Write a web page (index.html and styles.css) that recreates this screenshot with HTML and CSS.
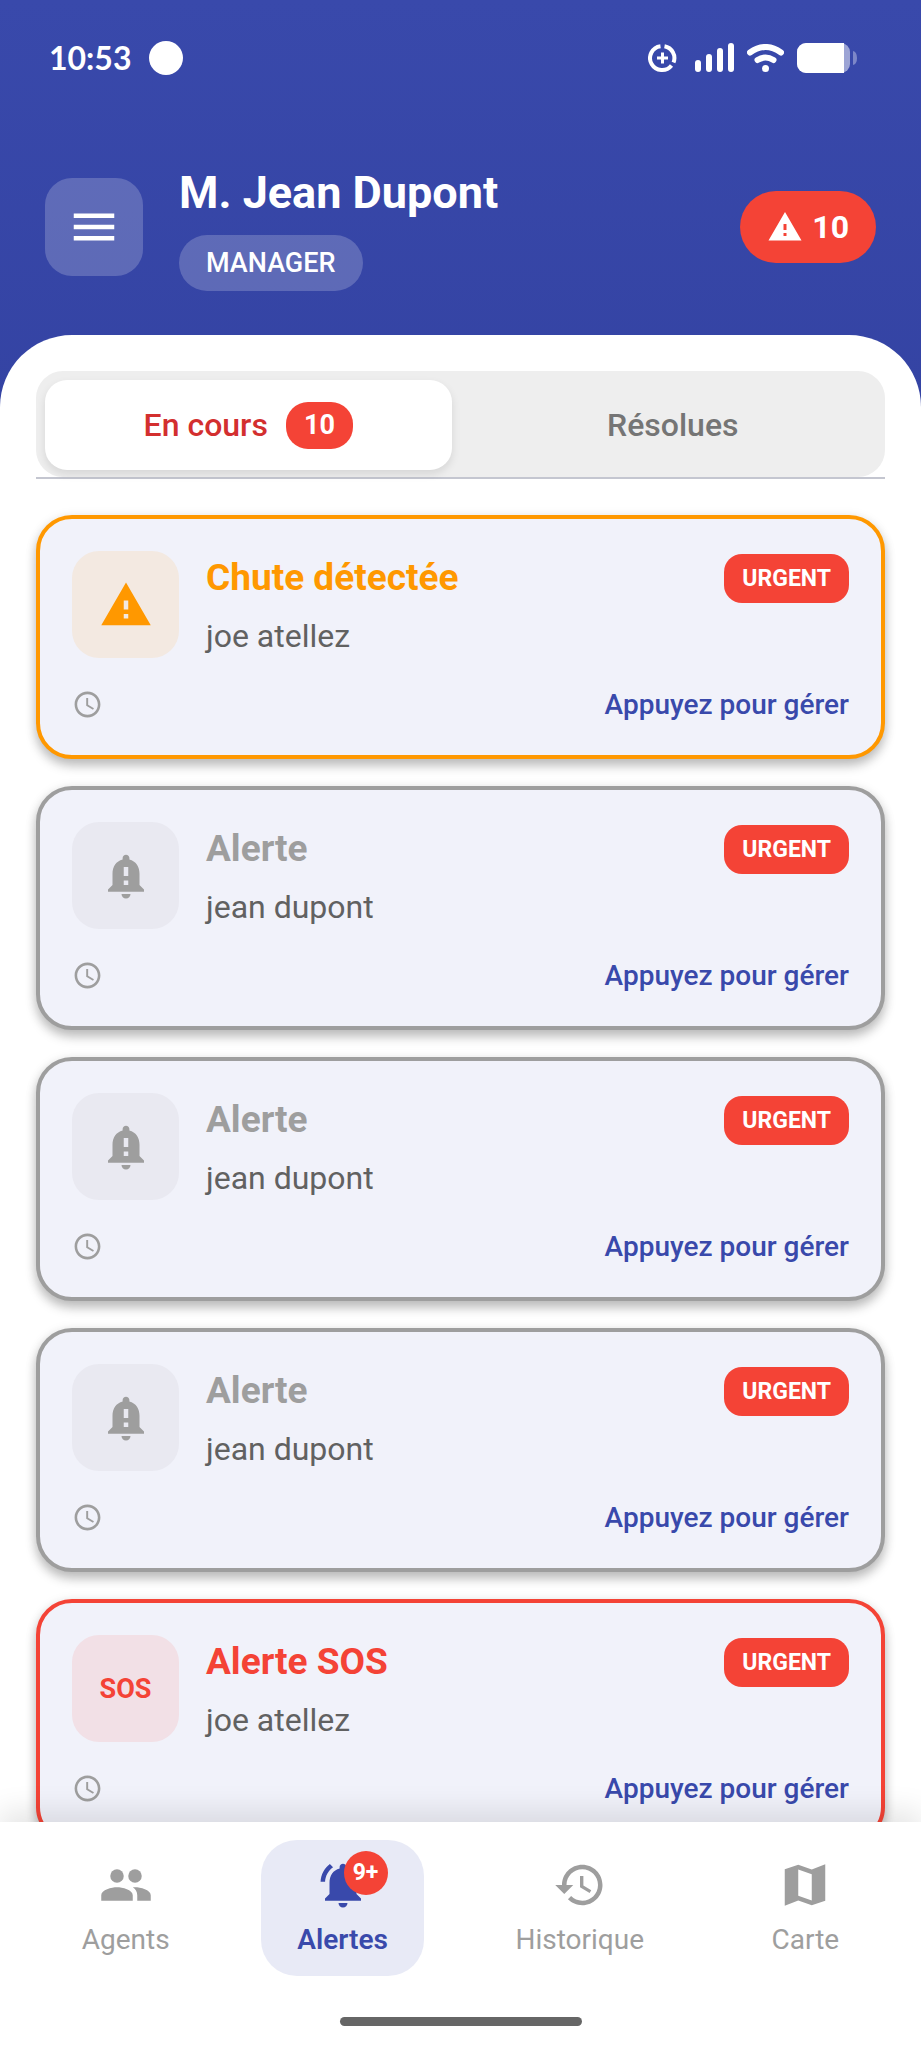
FILE: index.html
```html
<!DOCTYPE html>
<html lang="fr">
<head>
  <meta charset="UTF-8">
  <meta name="viewport" content="width=device-width, initial-scale=1.0">
  <title>Alertes</title>
  <link rel="stylesheet" href="styles.css">
</head>
<body>

  <svg class="sprite" aria-hidden="true">
    <symbol id="i-warning" viewBox="0 0 24 24"><path d="M1 21h22L12 2 1 21zm12-3h-2v-2h2v2zm0-4h-2v-4h2v4z"/></symbol>
    <symbol id="i-bell" viewBox="0 0 24 24"><path d="M18 16v-5c0-3.07-1.64-5.64-4.5-6.32V4c0-.83-.67-1.5-1.5-1.5s-1.5.67-1.5 1.5v.68C7.63 5.36 6 7.92 6 11v5l-2 2v1h16v-1l-2-2zm-5 0h-2v-2h2v2zm0-4h-2V8h2v4zm-1 10c1.1 0 2-.9 2-2h-4c0 1.1.89 2 2 2z"/></symbol>
    <symbol id="i-clock" viewBox="0 0 24 24"><path d="M11.99 2C6.47 2 2 6.48 2 12s4.47 10 9.99 10C17.52 22 22 17.52 22 12S17.52 2 11.99 2zM12 20c-4.42 0-8-3.58-8-8s3.58-8 8-8 8 3.58 8 8-3.58 8-8 8zm.5-13H11v6l5.25 3.15.75-1.23-4.5-2.67z"/></symbol>
  </svg>

  <div class="app">
    <div class="status-bar">
      <span class="time">10:53</span>
      <span class="dot"></span>
      <div class="status-icons">
        <svg width="29" height="30" viewBox="0 0 29 30" fill="none" stroke="#fff" stroke-width="4">
          <path d="M12.500 3.200A12 12 0 1 0 23.500 22.500"/>
          <path d="M16.500 3.200A12 12 0 0 1 25.500 19.500"/>
          <path d="M14.500 9.500v11M9 15h11" stroke-width="3"/>
        </svg>
        <svg class="signal" width="39" height="29" viewBox="0 0 39 29" fill="#fff">
          <rect x="0" y="17" width="6" height="12" rx="3"/>
          <rect x="11" y="11" width="6" height="18" rx="3"/>
          <rect x="22" y="5" width="6" height="24" rx="3"/>
          <rect x="33" y="0" width="6" height="29" rx="3"/>
        </svg>
        <svg width="37" height="28" viewBox="0 0 37 28" fill="none" stroke="#fff" stroke-width="6" stroke-linecap="round">
          <path d="M3 8.500Q18.500-2.500 34 8.500"/>
          <path d="M10.500 16q8-5 16 0"/>
          <circle cx="18.500" cy="24.500" r="3.500" fill="#fff" stroke="none"/>
        </svg>
        <svg width="60" height="30" viewBox="0 0 60 30">
          <rect width="53" height="30" rx="9" fill="#9ca4d5"/>
          <path d="M9 0h38v30H9a9 9 0 0 1-9-9V9a9 9 0 0 1 9-9z" fill="#fff"/>
          <path d="M56 8q4 1 4 7t-4 7z" fill="#7d87c8"/>
        </svg>
      </div>
    </div>

    <header class="header">
      <button class="menu-btn" type="button" aria-label="Menu">
        <svg class="icon" viewBox="0 0 24 24"><path d="M3 18h18v-2H3v2zm0-5h18v-2H3v2zm0-7v2h18V6H3z"/></svg>
      </button>
      <div class="user">
        <h1>M. Jean Dupont</h1>
        <span class="role">MANAGER</span>
      </div>
      <div class="alert-count">
        <svg class="icon-small"><use href="#i-warning"/></svg>
        <span>10</span>
      </div>
    </header>

    <main class="sheet">
      <div class="tabs" role="tablist">
        <button class="tab active" type="button" role="tab" aria-selected="true">
          En cours <span class="tab-count">10</span>
        </button>
        <button class="tab" type="button" role="tab" aria-selected="false">Résolues</button>
      </div>

      <div class="list">
        <article class="card fall">
          <div class="card-top">
            <div class="tile"><svg class="icon"><use href="#i-warning"/></svg></div>
            <div class="card-text">
              <div class="card-title"><h2>Chute détectée</h2><span class="urgent">URGENT</span></div>
              <p>joe atellez</p>
            </div>
          </div>
          <div class="card-foot">
            <svg class="clock"><use href="#i-clock"/></svg>
            <button type="button">Appuyez pour gérer</button>
          </div>
        </article>

        <article class="card">
          <div class="card-top">
            <div class="tile"><svg class="icon"><use href="#i-bell"/></svg></div>
            <div class="card-text">
              <div class="card-title"><h2>Alerte</h2><span class="urgent">URGENT</span></div>
              <p>jean dupont</p>
            </div>
          </div>
          <div class="card-foot">
            <svg class="clock"><use href="#i-clock"/></svg>
            <button type="button">Appuyez pour gérer</button>
          </div>
        </article>

        <article class="card">
          <div class="card-top">
            <div class="tile"><svg class="icon"><use href="#i-bell"/></svg></div>
            <div class="card-text">
              <div class="card-title"><h2>Alerte</h2><span class="urgent">URGENT</span></div>
              <p>jean dupont</p>
            </div>
          </div>
          <div class="card-foot">
            <svg class="clock"><use href="#i-clock"/></svg>
            <button type="button">Appuyez pour gérer</button>
          </div>
        </article>

        <article class="card">
          <div class="card-top">
            <div class="tile"><svg class="icon"><use href="#i-bell"/></svg></div>
            <div class="card-text">
              <div class="card-title"><h2>Alerte</h2><span class="urgent">URGENT</span></div>
              <p>jean dupont</p>
            </div>
          </div>
          <div class="card-foot">
            <svg class="clock"><use href="#i-clock"/></svg>
            <button type="button">Appuyez pour gérer</button>
          </div>
        </article>

        <article class="card sos">
          <div class="card-top">
            <div class="tile"><span class="sos-icon">SOS</span></div>
            <div class="card-text">
              <div class="card-title"><h2>Alerte SOS</h2><span class="urgent">URGENT</span></div>
              <p>joe atellez</p>
            </div>
          </div>
          <div class="card-foot">
            <svg class="clock"><use href="#i-clock"/></svg>
            <button type="button">Appuyez pour gérer</button>
          </div>
        </article>
      </div>
    </main>

    <footer class="bottom">
      <nav class="nav">
        <a href="#agents">
          <svg class="icon" viewBox="0 0 24 24"><circle cx="8" cy="8" r="3"/><circle cx="16" cy="8" r="3"/><path d="M8 13c-2.330 0-7 1.170-7 3.500V19h14v-2.500c0-2.330-4.670-3.500-7-3.500zM16 13c-.29 0-.62.02-.97.05 1.160.84 1.970 1.970 1.970 3.450V19h6v-2.500c0-2.330-4.670-3.500-7-3.500z"/></svg>
          <span>Agents</span>
        </a>
        <a href="#alertes" class="active">
          <div class="icon-wrap">
            <svg class="icon" viewBox="0 0 24 24"><path d="M7.58 4.080L6.150 2.650C3.750 4.480 2.170 7.300 2.030 10.500h2c.15-2.650 1.510-4.970 3.550-6.420zM19.970 10.500h2c-.15-3.200-1.730-6.020-4.120-7.850l-1.420 1.430c2.020 1.450 3.390 3.770 3.540 6.420zM18 11c0-3.070-1.640-5.640-4.500-6.320V4c0-.83-.67-1.500-1.500-1.500s-1.500.67-1.500 1.500v.68C7.630 5.360 6 7.920 6 11v5l-2 2v1h16v-1l-2-2v-5zM12 22c1.100 0 2-.9 2-2h-4c0 1.100.9 2 2 2z"/></svg>
            <span class="nav-badge">9+</span>
          </div>
          <span>Alertes</span>
        </a>
        <a href="#historique">
          <svg class="icon" viewBox="0 0 24 24"><path d="M13 3c-4.970 0-9 4.030-9 9H1l4 4 4-4H6c0-3.870 3.130-7 7-7s7 3.130 7 7-3.130 7-7 7c-1.930 0-3.680-.79-4.940-2.060l-1.420 1.420C8.270 19.990 10.510 21 13 21c4.970 0 9-4.030 9-9s-4.030-9-9-9zm-1 5v5l4.280 2.540.72-1.210-3.500-2.080V8H12z"/></svg>
          <span>Historique</span>
        </a>
        <a href="#carte">
          <svg class="icon" viewBox="0 0 24 24"><path d="M15 5.100L9 3 3 5.020v16.200l6-2.330 6 2.100 6-2.020V2.770L15 5.100zm0 13.790l-6-2.110V5.110l6 2.110v11.670z"/></svg>
          <span>Carte</span>
        </a>
      </nav>
      <div class="home-bar"></div>
    </footer>
  </div>

</body>
</html>
```

FILE: styles.css
```css
* {
  box-sizing: border-box;
}

body {
  margin: 0;
  font-family: Roboto, "Liberation Sans", sans-serif;
  font-size: 28px;
  line-height: 36px;
  color: #616161;
}

h1, h2, p {
  margin: 0;
}

button {
  font: inherit;
  border: none;
  padding: 0;
  background: none;
  cursor: pointer;
}

.sprite {
  display: none;
}

.icon {
  display: block;
  width: 54px;
  height: 54px;
  fill: currentColor;
}

.app {
  display: flex;
  flex-direction: column;
  height: 100vh;
  background: linear-gradient(#3949ab, #3443a3 420px);
}

/* status bar */
.status-bar {
  display: flex;
  align-items: center;
  height: 115px;
  padding: 0 64px 0 49px;
  gap: 18px;
}

.time {
  font-family: Lato, Roboto, sans-serif;
  font-size: 32px;
  font-weight: 700;
  color: #fff;
}

.dot {
  width: 34px;
  height: 34px;
  border-radius: 50%;
  background: #fff;
}

.status-icons {
  display: flex;
  align-items: center;
  gap: 13px;
  margin-left: auto;
}

.signal {
  margin-left: 5px;
}

/* header */
.header {
  display: flex;
  align-items: center;
  gap: 36px;
  padding: 48px 45px 44px;
  color: #fff;
}

.menu-btn {
  display: flex;
  align-items: center;
  justify-content: center;
  width: 98px;
  height: 98px;
  border-radius: 27px;
  background: rgba(255, 255, 255, 0.2);
  color: #fff;
}

.user {
  flex: 1;
  display: flex;
  flex-direction: column;
  align-items: flex-start;
  gap: 12px;
}

.user h1 {
  font-size: 45px;
  line-height: 60px;
  font-weight: 700;
}

.role {
  padding: 10px 27px;
  border-radius: 28px;
  background: rgba(255, 255, 255, 0.2);
  font-size: 27px;
  font-weight: 500;
}

.alert-count {
  display: flex;
  align-items: center;
  gap: 9px;
  padding: 18px 27px;
  border-radius: 36px;
  background: #f44336;
  font-size: 32px;
  font-weight: 700;
}

.icon-small {
  width: 36px;
  height: 36px;
  fill: #fff;
}

/* content */
.sheet {
  flex: 1;
  min-height: 0;
  display: flex;
  flex-direction: column;
  background: #fff;
  border-radius: 72px 72px 0 0;
  overflow: hidden;
}

.tabs {
  display: flex;
  gap: 18px;
  margin: 36px 36px 0;
  padding: 9px;
  background: linear-gradient(#c4c6d0, #c4c6d0) bottom / 100% 2px no-repeat;
  position: relative;
}

/* rounded track, the divider line stays square under it */
.tabs::before {
  content: "";
  position: absolute;
  inset: 0 0 2px;
  border-radius: 27px;
  background: #eee;
}

.tab {
  position: relative;
  flex: 1 1 0;
  min-width: 0;
  display: flex;
  align-items: center;
  justify-content: center;
  gap: 18px;
  height: 90px;
  border-radius: 22px;
  font-size: 32px;
  font-weight: 500;
  color: #757575;
}

.tab.active {
  background: #fff;
  box-shadow: 0 4px 9px rgba(0, 0, 0, 0.1);
  color: #d32f2f;
}

.tab-count {
  padding: 5px 18px;
  border-radius: 22px;
  background: #f44336;
  color: #fff;
  font-size: 27px;
  line-height: 37px;
  font-weight: 700;
}

.list {
  flex: 1;
  min-height: 0;
  overflow-y: auto;
  scrollbar-width: none;
  display: flex;
  flex-direction: column;
  gap: 27px;
  padding: 36px;
}

.card {
  flex: none;
  border: 4px solid #9e9e9e;
  border-radius: 36px;
  padding: 32px;
  background: #f1f2fa;
  box-shadow: 0 7px 11px rgba(0, 0, 0, 0.22), 0 2px 12px rgba(0, 0, 0, 0.1);
  color: #9e9e9e;
}

.card-top {
  display: flex;
  gap: 27px;
}

.tile {
  display: flex;
  align-items: center;
  justify-content: center;
  width: 107px;
  height: 107px;
  border-radius: 27px;
  background: #e9e9f1;
}

.card-text {
  flex: 1;
}

.card-title {
  display: flex;
  align-items: center;
  justify-content: space-between;
  height: 54px;
  margin-bottom: 9px;
}

.card-title h2 {
  font-size: 37px;
  font-weight: 700;
}

.card-text p {
  font-size: 32px;
  line-height: 44px;
  color: #616161;
}

.urgent {
  padding: 9px 18px;
  border-radius: 18px;
  background: #f44336;
  color: #fff;
  font-size: 23px;
  line-height: 31px;
  font-weight: 700;
}

.card-foot {
  display: flex;
  align-items: center;
  justify-content: space-between;
  height: 38px;
  margin-top: 27px;
}

.card-foot button {
  padding-top: 2px;
  color: #3949ab;
  font-weight: 500;
}

.clock {
  width: 31px;
  height: 31px;
  fill: #9e9e9e;
}

.fall {
  border-color: #ff9800;
  color: #ff9800;
}

.fall .tile {
  background: #f3e9e1;
}

.sos {
  border-color: #f44336;
  color: #f44336;
}

.sos .tile {
  background: #f2e0e6;
}

.sos-icon {
  font-size: 27px;
  font-weight: 700;
}

/* bottom navigation */
.bottom {
  position: relative;
  padding: 18px 18px 22px;
  background: #fff;
  box-shadow: 0 -11px 27px rgba(0, 0, 0, 0.1);
}

.nav {
  display: flex;
  justify-content: space-around;
}

.nav a {
  display: flex;
  flex-direction: column;
  align-items: center;
  gap: 10px;
  padding: 18px 36px;
  border-radius: 36px;
  color: #9e9e9e;
  text-decoration: none;
}

.nav a.active {
  background: #e8eaf6;
  color: #3949ab;
  font-weight: 600;
}

.icon-wrap {
  position: relative;
}

.nav-badge {
  position: absolute;
  top: -7px;
  right: -18px;
  width: 44px;
  height: 44px;
  border-radius: 50%;
  background: #f44336;
  color: #fff;
  font-size: 23px;
  line-height: 44px;
  font-weight: 700;
  text-align: center;
}

.home-bar {
  width: 242px;
  height: 9px;
  margin: 41px auto 0;
  border-radius: 5px;
  background: #666;
}
```
